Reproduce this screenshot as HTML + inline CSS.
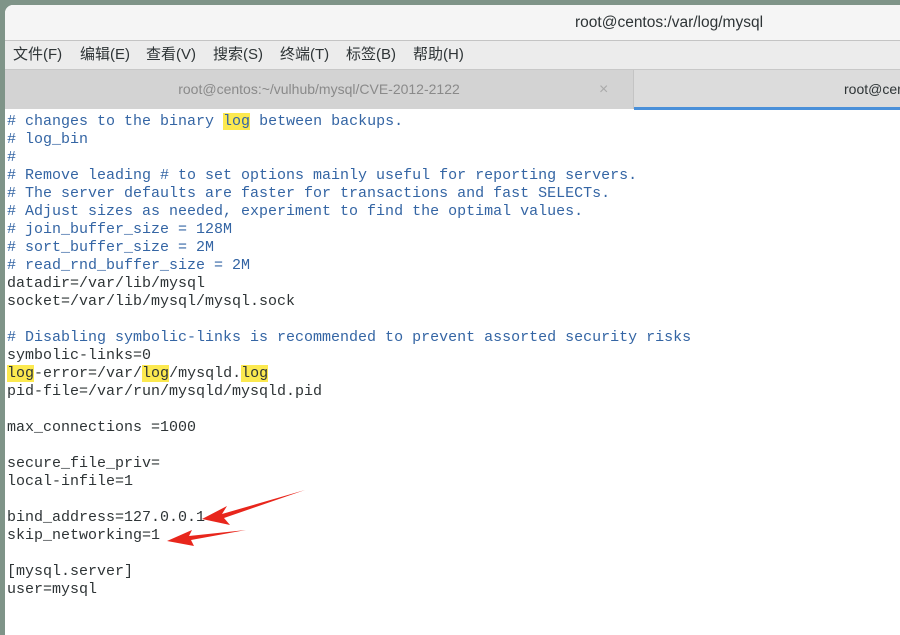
<!DOCTYPE html>
<html><head><meta charset="utf-8"><style>
body{margin:0;width:900px;height:635px;overflow:hidden;background:#7f9488;position:relative;font-family:"Liberation Sans","Noto Sans CJK SC",sans-serif}
.win{position:absolute;left:5px;top:5px;right:0;bottom:0;background:#fff;border-top-left-radius:8px;overflow:hidden}
.title{height:36px;background:#f5f5f5;border-bottom:1px solid #c4c4c4;line-height:36px;font-size:15.5px;color:#2e3436;box-sizing:border-box;padding-left:570px}
.menu{height:28px;background:#ececec;font-size:15px;color:#2e3436;line-height:28px;padding-left:8px;position:relative}
.menu span{position:absolute;top:0}
.tabs{height:40px;background:#d3d3d3;position:relative;border-top:1px solid #c8c8c8;box-sizing:border-box}
.t1{position:absolute;left:0;width:628px;top:0;height:39px;line-height:39px;text-align:center;color:#8a8a8a;font-size:14px}
.x{position:absolute;left:594px;top:0;line-height:39px;color:#aaa;font-size:16px}
.t2{position:absolute;left:628px;right:0;top:0;height:39px;background:#dcdcdc;border-left:1px solid #c4c4c4}
.t2 span{position:absolute;left:210px;line-height:39px;font-size:14px;color:#2e3436}
.t2 i{position:absolute;left:0;right:0;bottom:-1px;height:3px;background:#4a90d9}
pre{margin:0;padding:4px 0 0 2px;font-family:"Liberation Mono",monospace;font-size:15px;line-height:18px;color:#2e3436}
.c{color:#3465a4}.h{background:#fce94f}
</style></head><body>
<div class="win">
<div class="title">root@centos:/var/log/mysql</div>
<div class="menu"><span style="left:8px">文件(F)</span><span style="left:75px">编辑(E)</span><span style="left:141px">查看(V)</span><span style="left:208px">搜索(S)</span><span style="left:275px">终端(T)</span><span style="left:341px">标签(B)</span><span style="left:408px">帮助(H)</span></div>
<div class="tabs"><div class="t1">root@centos:~/vulhub/mysql/CVE-2012-2122</div><div class="x">×</div><div class="t2"><span>root@centos:/var/log/mysql</span><i></i></div></div>
<pre><span class="c"># changes to the binary <span class="h">log</span> between backups.
# log_bin
#
# Remove leading # to set options mainly useful for reporting servers.
# The server defaults are faster for transactions and fast SELECTs.
# Adjust sizes as needed, experiment to find the optimal values.
# join_buffer_size = 128M
# sort_buffer_size = 2M
# read_rnd_buffer_size = 2M</span>
datadir=/var/lib/mysql
socket=/var/lib/mysql/mysql.sock

<span class="c"># Disabling symbolic-links is recommended to prevent assorted security risks</span>
symbolic-links=0
<span class="h">log</span>-error=/var/<span class="h">log</span>/mysqld.<span class="h">log</span>
pid-file=/var/run/mysqld/mysqld.pid

max_connections =1000

secure_file_priv=
local-infile=1

bind_address=127.0.0.1
skip_networking=1

[mysql.server]
user=mysql</pre>
</div>
<svg style="position:absolute;left:0;top:0" width="900" height="635">
<polygon points="305,490 222,514 227,506 202,519 230,525 224,518" fill="#e8261c"/>
<polygon points="246,530 189,536 192,530 167,541 194,546 191,540" fill="#e8261c"/>
</svg>
</body></html>
